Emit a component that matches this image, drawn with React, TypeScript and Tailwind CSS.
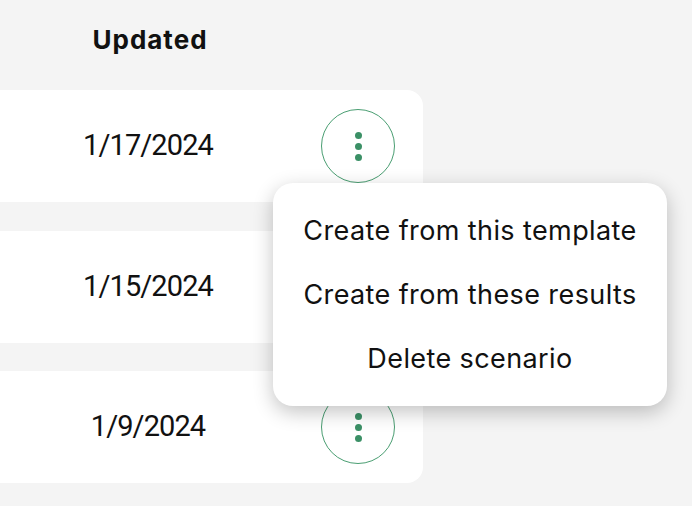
import React from "react";

const rows = ["1/17/2024", "1/15/2024", "1/9/2024"];

function MoreButton() {
  return (
    <button className="flex h-[74px] w-[74px] flex-col items-center justify-center gap-[4px] rounded-full border border-[#4a9e72] bg-white">
      <span className="h-[7px] w-[7px] rounded-full bg-[#3b9066]" />
      <span className="h-[7px] w-[7px] rounded-full bg-[#3b9066]" />
      <span className="h-[7px] w-[7px] rounded-full bg-[#3b9066]" />
    </button>
  );
}

export default function App() {
  return (
    <div className="relative h-[506px] w-[692px] overflow-hidden bg-[#f4f4f4] font-['Inter',sans-serif] text-[#111]">
      <div className="flex h-[90px] w-[300px] items-center justify-center pb-[11px] text-[26px] font-bold tracking-[1px]">
        Updated
      </div>
      <div className="flex flex-col gap-[28.5px]">
        {rows.map((date) => (
          <div key={date} className="flex h-[112px] w-[423px] items-center rounded-r-[16px] bg-white">
            <div className="w-[296px] text-center font-['Roboto',sans-serif] text-[29px] tracking-[-0.9px]">{date}</div>
            <div className="ml-[25px]">
              <MoreButton />
            </div>
          </div>
        ))}
      </div>

      <div className="absolute left-[273px] top-[183px] flex h-[223px] w-[394px] flex-col items-center justify-center gap-[34px] rounded-[20px] bg-white text-[27px] tracking-[0.4px] shadow-[0_6px_20px_rgba(0,0,0,0.24)]">
        <div className="leading-[30px]">Create from this template</div>
        <div className="leading-[30px]">Create from these results</div>
        <div className="leading-[30px]">Delete scenario</div>
      </div>
    </div>
  );
}
